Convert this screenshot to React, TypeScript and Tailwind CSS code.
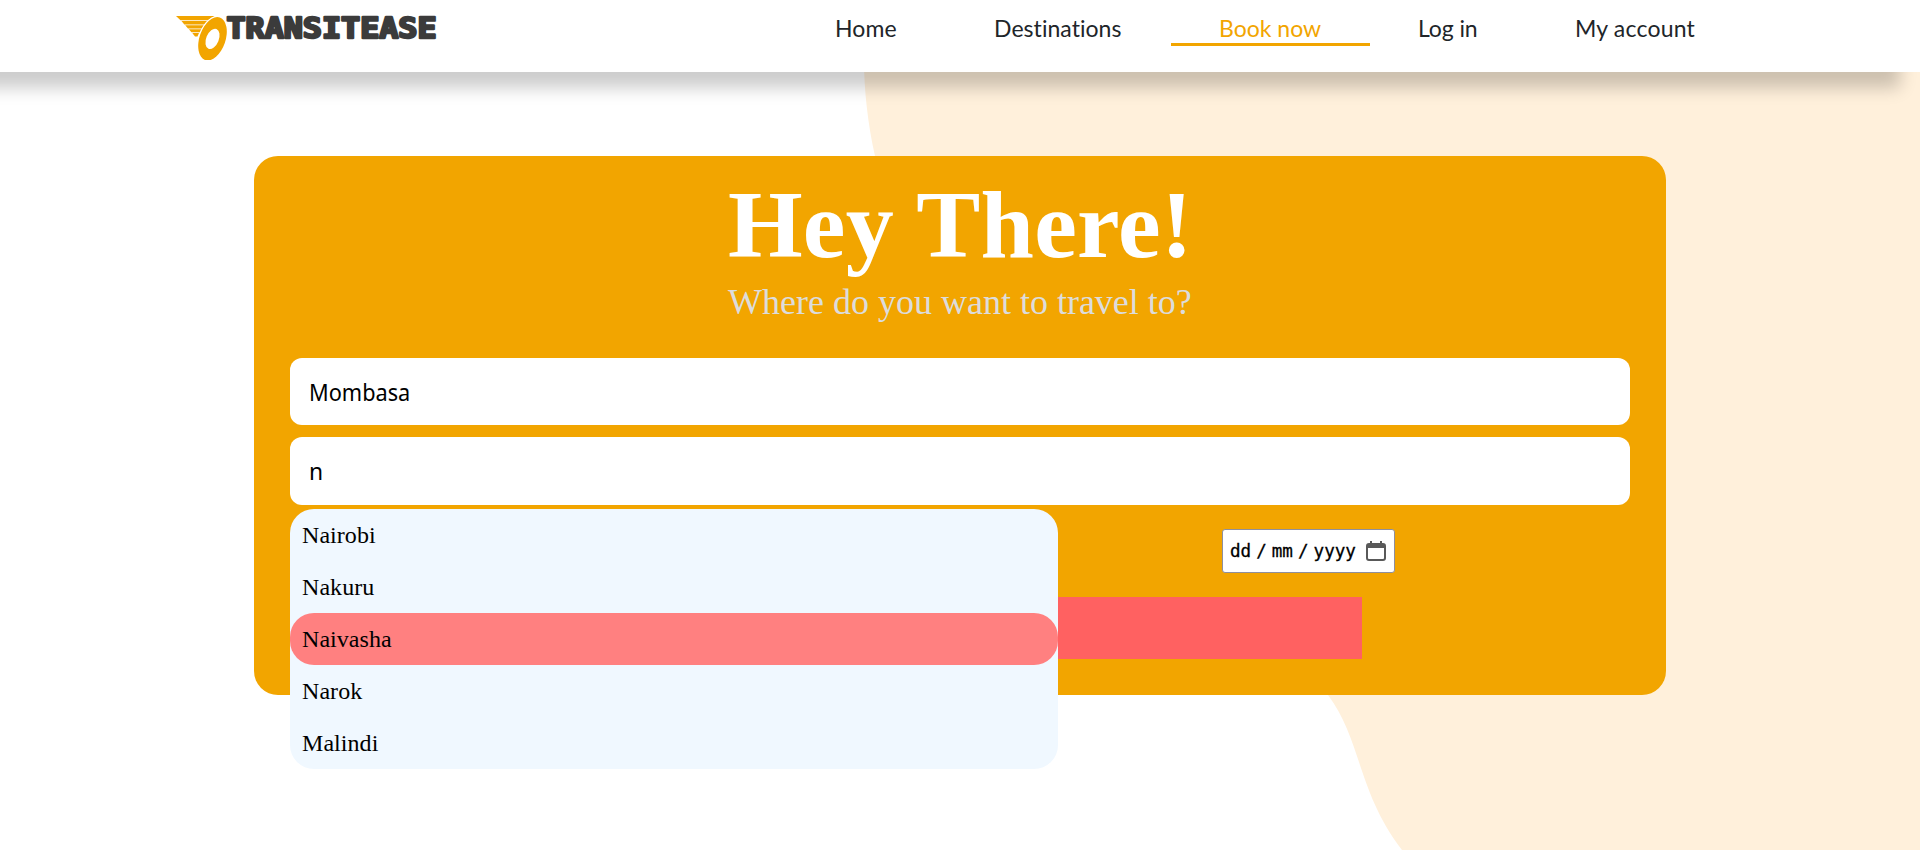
const links = [
  { label: "Home", w: "w-[63px]", t: "tracking-[0.1px]" },
  { label: "Destinations", w: "w-[129px]", t: "tracking-[0.05px]" },
  { label: "Book now", w: "w-[103px]", t: "tracking-[0px]", active: true },
  { label: "Log in", w: "w-[61px]", t: "tracking-[-0.1px]" },
  { label: "My account", w: "w-[123px]", t: "tracking-[0.2px]" },
];

const towns = ["Nairobi", "Nakuru", "Naivasha", "Narok", "Malindi"];

function Logo() {
  return (
    <svg width="290" height="54" viewBox="0 0 290 54" className="block overflow-visible">
      <g fill="#f2a500">
        <path d="M1 1H40L33 5.200H5.500Z" />
        <path d="M6.500 6.100H32L29.500 9.500H9.300Z" />
        <path d="M10.200 10.300H29L27 13.500H13Z" />
        <path d="M13.800 14.300H26.500L25 17.300H16.500Z" />
        <path d="M17.300 18.100H24L22.500 21.400H20Z" />
      </g>
      <clipPath id="wheel">
        <rect x="18" y="0" width="40" height="45" />
      </clipPath>
      <g clipPath="url(#wheel)">
        <ellipse cx="37.500" cy="23.800" rx="14.200" ry="23.700" transform="rotate(19 37.500 23.800)" fill="#fff" />
        <ellipse cx="37.500" cy="23.800" rx="13" ry="22.500" transform="rotate(19 37.500 23.800)" fill="#f2a500" />
        <ellipse cx="37.500" cy="23.900" rx="6.300" ry="10.700" transform="rotate(22 37.500 23.900)" fill="#fff" />
      </g>
      <text
        x="51.500"
        y="22.600"
        fontFamily="DejaVu Sans Mono"
        fontWeight="700"
        fontSize="27.500"
        fill="#3b3b3b"
        stroke="#3b3b3b"
        strokeWidth="2.400"
        strokeLinejoin="round"
        textLength="210"
        lengthAdjust="spacingAndGlyphs"
      >
        TRANSITEASE
      </text>
    </svg>
  );
}

function CalendarIcon() {
  return (
    <svg width="20" height="20" viewBox="0 0 20 20" fill="none" className="block">
      <rect x="1" y="3" width="18" height="16" rx="2" stroke="#595959" strokeWidth="2" />
      <path d="M1 3h18v4H1zM4 0h2v3H4zM14 0h2v3h-2z" fill="#595959" />
    </svg>
  );
}

export default function App() {
  return (
    <div className="relative h-[850px] w-full overflow-hidden bg-white">
      <svg className="absolute inset-0" width="1920" height="850" viewBox="0 0 1920 850">
        <path
          fill="#fff0db"
          d="M864 60C864 90 868 125 875 156C920 420 1200 540 1328 695C1362 741 1357 791 1402 850H1920V60Z"
        />
      </svg>

      <header className="relative flex h-[72px] justify-between bg-white pr-[174px] pl-[175px] shadow-[-20px_16px_16px_rgba(0,0,0,0.2)]">
        <div className="pt-[15px]">
          <Logo />
        </div>
        <nav className="flex h-[46px]">
          {links.map((l) => (
            <a
              key={l.label}
              className={
                "box-content flex h-[43px] px-12 font-['Lato',sans-serif] text-[23px] leading-[56px] whitespace-nowrap " +
                l.w +
                " " +
                l.t +
                (l.active ? " border-b-[3px] border-[#f2a500] text-[#f2a500]" : " text-[#212529]")
              }
            >
              {l.label}
            </a>
          ))}
        </nav>
      </header>

      <main className="relative mx-auto mt-[84px] h-[539px] w-[1412px] rounded-[24px] bg-[#f2a500] px-9">
        <div className="mx-auto w-[464px] pt-[14px] font-['Liberation_Serif',serif]">
          <h1 className="text-[96px] leading-[110px] font-bold tracking-[0.2px] whitespace-nowrap text-white">Hey There!</h1>
          <p className="mt-[2px] text-[36px] leading-[41px] whitespace-nowrap text-[#dcdcdc]">Where do you want to travel to?</p>
        </div>
        <div className="mt-[35px] flex flex-col gap-3 font-['Noto_Sans',sans-serif] text-[24px] text-black">
          <div className="flex h-[67px] items-center rounded-[12px] bg-white px-[19px]">
            <span className="origin-left scale-x-[0.905]">Mombasa</span>
          </div>
          <div className="relative flex h-[68px] items-center rounded-[12px] bg-white px-[19px]">
            <span className="origin-left scale-x-[0.95]">n</span>
            <ul className="absolute top-[72px] left-0 z-10 w-[768px] rounded-[24px] bg-[#f0f8ff] font-['Liberation_Serif',serif]">
              {towns.map((t) => (
                <li
                  key={t}
                  className={
                    "h-[52px] rounded-[24px] px-3 text-[24px] leading-[52px] tracking-[0.05px] " +
                    (t === "Naivasha" ? "bg-[#ff8080]" : "")
                  }
                >
                  {t}
                </li>
              ))}
            </ul>
          </div>
        </div>
        <div className="mt-6 ml-[932px] flex h-11 w-[173px] items-center justify-between rounded-[3px] border border-[#8f8f9d] bg-white pr-2 pl-[7px] font-['DejaVu_Sans_Mono',monospace] text-[17.600px] whitespace-nowrap text-black [-webkit-text-stroke:0.3px_black]">
          <div className="flex gap-[5px]">
            <span>dd</span>
            <span>/</span>
            <span>mm</span>
            <span>/</span>
            <span>yyyy</span>
          </div>
          <CalendarIcon />
        </div>
        <div className="mx-auto mt-6 h-[62px] w-[804px] bg-[#ff6161]" />
      </main>
    </div>
  );
}
